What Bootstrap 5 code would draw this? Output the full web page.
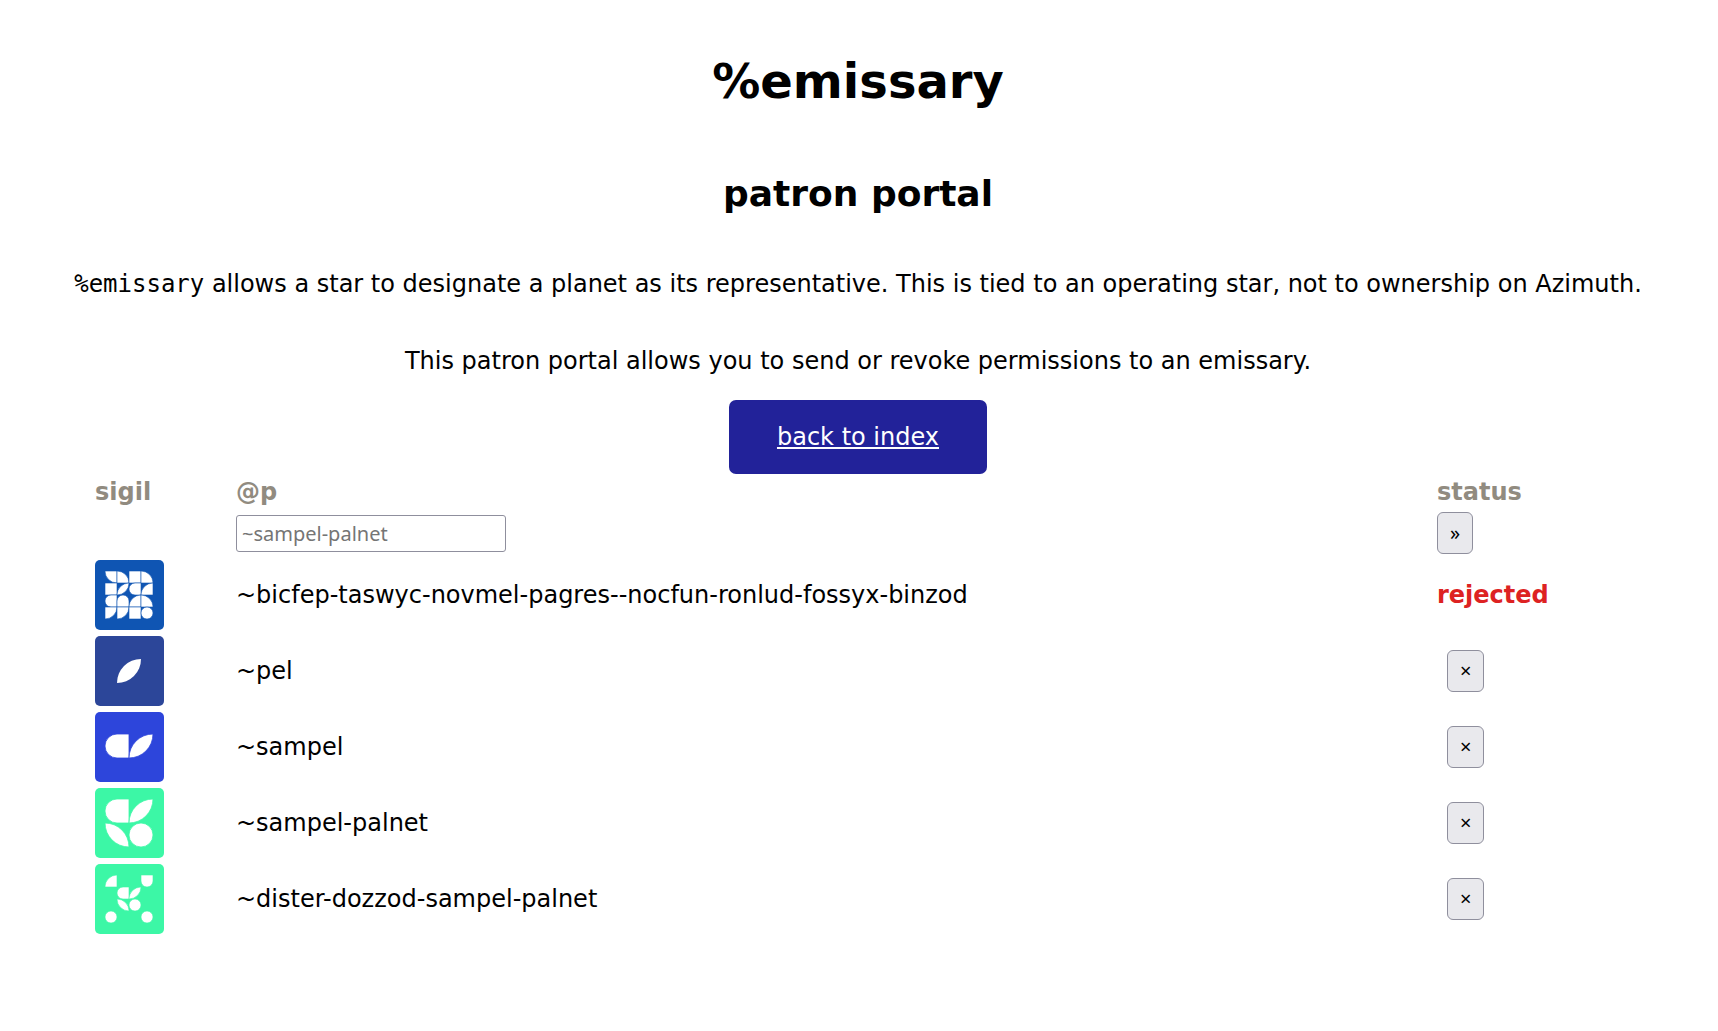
<!DOCTYPE html>
<html lang="en">
<head>
<meta charset="utf-8">
<meta name="viewport" content="width=device-width, initial-scale=1">
<title>%emissary</title>
<link rel="stylesheet" href="https://cdn.jsdelivr.net/npm/bootstrap@5.3.0/dist/css/bootstrap.min.css">
<style>
body { font-family: "DejaVu Sans", sans-serif; font-size: 24px; line-height: 28px; color: #000; }
main { padding-right: 2px; }
.title-main { font-size: 48px; line-height: 56px; margin: 53px 0 64px; }
.title-sub { font-size: 36px; line-height: 42px; margin: 0 0 31px; }
.intro { padding: 24px 0; margin: 0 0 1px; }
.intro code { font-family: "DejaVu Sans Mono", monospace; font-size: 24px; color: inherit; }
.back-link { font-size: 24px; line-height: 26px; padding: 24px 48px; border: 0; border-radius: 7px; background: #222299; color: #fff; text-decoration-thickness: 1px; }
.back-link:hover { background: #1a1a7a; color: #fff; }
.patrons { margin: 0 93px 0 95px; }
.patrons th, .patrons td { padding: 0; text-align: left; vertical-align: middle; }
.patrons th { color: #918b80; height: 35px; }
.patrons .col-sigil { width: 141px; }
.patrons .col-status { width: 186px; }
.entry-row td { height: 48px; }
.ship-row td { height: 76px; }
.ship-input { display: block; width: 270px; height: 37px; padding: 0 5px; border: 1px solid #8f8f9d; border-radius: 3px; font-family: "Noto Sans", sans-serif; font-size: 20px; color: #000; }
.ship-input::placeholder { color: #757575; }
.act { display: block; min-width: 36px; height: 42px; padding: 0 12px; border: 1px solid #8f8f9d; border-radius: 6px; background: #e9e9ed; color: #000; font-family: "Noto Sans", sans-serif; font-size: 20px; line-height: 38px; }
.act-x { margin-left: 10px; }
.rejected { color: #dd2222; }
.sigil { display: block; width: 69px; height: 70px; border-radius: 5px; fill: #fff; }
</style>
<script src="https://cdn.jsdelivr.net/npm/bootstrap@5.3.0/dist/js/bootstrap.bundle.min.js"></script>
</head>
<body>
<svg width="0" height="0" class="position-absolute" aria-hidden="true">
  <defs>
    <path id="sq" d="M0 0H12V12H0Z"/>
    <path id="q-bl" d="M0 0H12V12A12 12 0 0 1 0 0Z"/>
    <path id="q-tr" d="M0 0A12 12 0 0 1 12 12H0Z"/>
    <path id="q-tl" d="M12 0V12H0A12 12 0 0 1 12 0Z"/>
    <path id="q-br" d="M0 0H12A12 12 0 0 1 0 12Z"/>
    <path id="leaf" d="M0 12A12 12 0 0 1 12 0A12 12 0 0 1 0 12Z"/>
    <path id="leaf-d" d="M0 0A12 12 0 0 1 12 12A12 12 0 0 1 0 0Z"/>
    <path id="dee" d="M12 0V12H6A6 6 0 0 1 6 0Z"/>
    <path id="arch" d="M0 12V6A6 6 0 0 1 12 6V12Z"/>
    <path id="cup" d="M0 0H12V6A6 6 0 0 1 0 6Z"/>
    <circle id="dot" cx="6" cy="6" r="6"/>
  </defs>
</svg>
<main class="text-center overflow-hidden">
  <h1 class="title-main fw-bold">%emissary</h1>
  <h2 class="title-sub fw-bold">patron portal</h2>
  <p class="intro"><code>%emissary</code> allows a star to designate a planet as its representative. This is tied to an operating star, not to ownership on Azimuth.</p>
  <p class="intro">This patron portal allows you to send or revoke permissions to an emissary.</p>
  <a class="btn back-link text-decoration-underline" href="#">back to index</a>
  <form class="patrons">
    <table class="w-100">
      <thead>
        <tr><th class="col-sigil" scope="col">sigil</th><th scope="col"><label for="ship">@p</label></th><th class="col-status" scope="col">status</th></tr>
      </thead>
      <tbody>
        <tr class="entry-row">
          <td></td>
          <td><input class="ship-input" id="ship" type="text" placeholder="~sampel-palnet"></td>
          <td><button class="act" type="button" aria-label="Send">»</button></td>
        </tr>
        <tr class="ship-row">
          <td><svg class="sigil" viewBox="0 0 69 70"><path fill="#0f55b3" d="M0 0H69V70H0Z"/>
            <g transform="translate(10 11)" stroke="#0f55b3" stroke-width=".6">
              <use href="#q-bl"/><use href="#q-tr" x="12"/><use href="#sq" x="24"/><use href="#q-tr" x="36"/>
              <use href="#sq" y="12"/><use href="#leaf" x="12" y="12"/><use href="#dee" x="24" y="12"/><use href="#q-tl" x="36" y="12"/>
              <use href="#dee" y="24"/><use href="#arch" x="12" y="24"/><use href="#q-tl" x="24" y="24"/><use href="#q-tr" x="36" y="24"/>
              <use href="#q-br" y="36"/><use href="#q-br" x="12" y="36"/><use href="#sq" x="24" y="36"/><use href="#dot" x="36" y="36"/>
            </g></svg></td>
          <td>~bicfep-taswyc-novmel-pagres--nocfun-ronlud-fossyx-binzod</td>
          <td><strong class="rejected">rejected</strong></td>
        </tr>
        <tr class="ship-row">
          <td><svg class="sigil" viewBox="0 0 69 70"><path fill="#2c4699" d="M0 0H69V70H0Z"/>
            <use href="#leaf" transform="translate(22 23) scale(2)"/></svg></td>
          <td>~pel</td>
          <td><button class="act act-x" type="button" aria-label="Revoke ~pel">×</button></td>
        </tr>
        <tr class="ship-row">
          <td><svg class="sigil" viewBox="0 0 69 70"><path fill="#2d45db" d="M0 0H69V70H0Z"/>
            <g transform="translate(10 22) scale(2)" stroke="#2d45db" stroke-width=".4"><use href="#dee"/><use href="#leaf" x="12"/></g></svg></td>
          <td>~sampel</td>
          <td><button class="act act-x" type="button" aria-label="Revoke ~sampel">×</button></td>
        </tr>
        <tr class="ship-row">
          <td><svg class="sigil" viewBox="0 0 69 70"><path fill="#3cf7a6" d="M0 0H69V70H0Z"/>
            <g transform="translate(10 11) scale(2)" stroke="#3cf7a6" stroke-width=".4"><use href="#dee"/><use href="#leaf" x="12"/><use href="#leaf-d" y="12"/><use href="#dot" x="12" y="12"/></g></svg></td>
          <td>~sampel-palnet</td>
          <td><button class="act act-x" type="button" aria-label="Revoke ~sampel-palnet">×</button></td>
        </tr>
        <tr class="ship-row">
          <td><svg class="sigil" viewBox="0 0 69 70"><path fill="#3cf7a6" d="M0 0H69V70H0Z"/>
            <g transform="translate(10 11)" stroke="#3cf7a6" stroke-width=".6"><use href="#q-tl"/><use href="#cup" x="36"/><use href="#dee" x="12" y="12"/><use href="#leaf" x="24" y="12"/><use href="#leaf-d" x="12" y="24"/><use href="#dot" x="24" y="24"/><use href="#dot" y="36"/><use href="#dot" x="36" y="36"/></g></svg></td>
          <td>~dister-dozzod-sampel-palnet</td>
          <td><button class="act act-x" type="button" aria-label="Revoke ~dister-dozzod-sampel-palnet">×</button></td>
        </tr>
      </tbody>
    </table>
  </form>
</main>
</body>
</html>
